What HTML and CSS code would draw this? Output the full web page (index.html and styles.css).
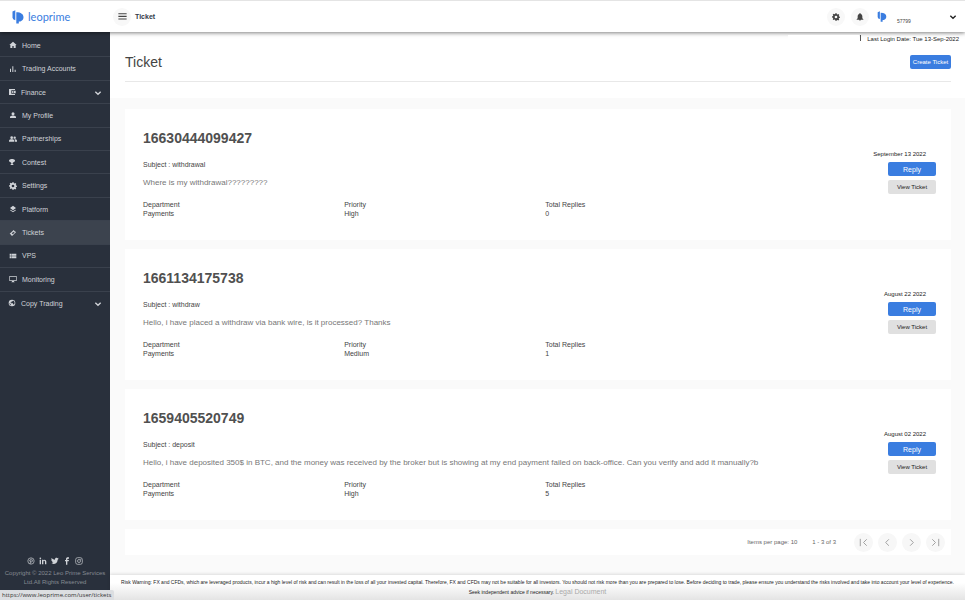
FILE: index.html
```html
<!DOCTYPE html>
<html lang="en">
<head>
  <meta charset="UTF-8">
  <title>Ticket</title>
  <link rel="stylesheet" href="styles.css">
</head>
<body>
  <header class="topbar">
    <a class="logo" href="#">
      <svg class="logo-mark" viewBox="0 0 12 14"><path d="M0.500 1.500L3.300 0.300V10.200Q0.500 9.800 0.500 7.500Z"/><path d="M4.300 2.200C9 2.200 11.500 4.200 11.500 7.200S9 11.600 6.800 11.600V13.600H4.300Z"/></svg>
      <span>leoprime</span>
    </a>
    <button class="round menu-btn" aria-label="Menu"><svg viewBox="0 0 24 24"><path d="M1 3h22v3H1zM1 10h22v3H1zM1 17h22v3H1z"/></svg></button>
    <span class="topbar-title">Ticket</span>
    <div class="topbar-right">
      <button class="round" aria-label="Settings"><svg viewBox="0 0 24 24"><use href="#gear"/></svg></button>
      <button class="round" aria-label="Notifications"><svg viewBox="0 0 24 24"><path d="M12 23a2.500 2.500 0 0 0 2.500-2.500h-5A2.500 2.500 0 0 0 12 23zM19 16v-6c0-3.500-2-6-5-6.700V2a2 2 0 0 0-4 0v1.300C7 4 5 6.500 5 10v6l-3 3v1h20v-1z"/></svg></button>
      <svg class="avatar" viewBox="0 0 12 14"><path d="M0.500 1.500L3.300 0.300V10.200Q0.500 9.800 0.500 7.500Z"/><path d="M4.300 2.200C9 2.200 11.500 4.200 11.500 7.200S9 11.600 6.800 11.600V13.600H4.300Z"/></svg>
      <span class="account">57799</span>
      <button class="account-toggle" aria-label="Account"><svg viewBox="0 0 12 8"><path d="M2 2l4 4 4-4"/></svg></button>
    </div>
  </header>

  <div class="layout">
    <aside class="sidebar">
      <nav class="nav">
        <a href="#"><svg viewBox="0 0 24 24"><path d="M10 21v-6h4v6h6v-9h3L12 2 1 12h3v9z"/></svg>Home</a>
        <a href="#"><svg viewBox="0 0 24 24"><path d="M3 11h3v10H3zM10 4h3v17h-3zM17 14h3v7h-3z"/></svg>Trading Accounts</a>
        <a href="#" class="group"><svg viewBox="0 0 24 24"><path d="M21 18v3H3V3h18v3h-9a2 2 0 0 0-2 2v8a2 2 0 0 0 2 2zM12 8v8h11V8zm4 6a2 2 0 1 1 0-4 2 2 0 0 1 0 4z"/></svg>Finance<svg class="chevron" viewBox="0 0 12 8"><path d="M2 2l4 4 4-4"/></svg></a>
        <a href="#"><svg viewBox="0 0 24 24"><circle cx="12" cy="8" r="4.500"/><path d="M3 21v-3c0-3 6-4.500 9-4.500s9 1.500 9 4.500v3z"/></svg>My Profile</a>
        <a href="#"><svg viewBox="0 0 24 24"><circle cx="8" cy="8" r="4"/><circle cx="17" cy="8" r="3.500"/><path d="M0 20v-3c0-3 5-4 8-4s8 1 8 4v3zM17 13c3 0 7 1.500 7 4v3h-6v-3c0-2-1-3-2-4z"/></svg>Partnerships</a>
        <a href="#"><svg viewBox="0 0 24 24"><path d="M4 3h10v2h4c0 5-1 7-5 7.500-.5 1.500-1.500 2-2 2.500v3h2v3H5v-3h2v-3c-.5-.5-1.500-1-2-2.500C1 12 0 10 0 5h4z"/></svg>Contest</a>
        <a href="#"><svg viewBox="0 0 24 24"><use href="#gear"/></svg>Settings</a>
        <a href="#"><svg viewBox="0 0 24 24"><path d="M12 2l9 7-9 7-9-7zM5 14l7 5 7-5 2 1.500L12 22l-9-6.500z"/></svg>Platform</a>
        <a href="#" class="active"><svg viewBox="0 0 24 24"><path d="M14 3l2 2a2 2 0 0 0 2 2l3 3L9 21l-3-3a2 2 0 0 0-2-2l-2-2zm0 5l-6 5 3 3 6-5z" fill-rule="evenodd"/></svg>Tickets</a>
        <a href="#"><svg viewBox="0 0 24 24"><path d="M2 5h5v4H2zM8 5h14v4H8zM2 10h5v4H2zM8 10h14v4H8zM2 15h5v4H2zM8 15h14v4H8z"/></svg>VPS</a>
        <a href="#"><svg viewBox="0 0 24 24"><path d="M1 3h22v15h-8v2h2v2H7v-2h2v-2H1zm2 2v11h18V5z" fill-rule="evenodd"/></svg>Monitoring</a>
        <a href="#" class="group"><svg viewBox="0 0 24 24"><path d="M12 2a10 10 0 1 0 0 20 10 10 0 0 0 0-20zM11 20c-4-.5-7-4-7-8l5 5v1c0 1 1 2 2 2zm7-2.500c-.3-.9-1-1.500-2-1.500h-1v-3H8v-3h3V7h4V4.500c5 2 6.500 8 3 13z" fill-rule="evenodd"/></svg>Copy Trading<svg class="chevron" viewBox="0 0 12 8"><path d="M2 2l4 4 4-4"/></svg></a>
      </nav>
      <div class="sidebar-foot">
        <div class="social">
          <a href="#" aria-label="Pinterest"><svg viewBox="0 0 24 24"><circle cx="12" cy="12" r="9.500" class="line"/><path class="line" d="M9 21l3-12M8.500 13c-3-6 7-9 8-3 .5 5-4 6-5.500 4"/></svg></a>
          <a href="#" aria-label="LinkedIn"><svg viewBox="0 0 24 24"><circle cx="4" cy="4" r="2.500"/><path d="M2 8h4v14H2zM9 8h4v2c3-4 9-2 9 4v8h-4v-8c0-4-5-3-5 0v8H9z"/></svg></a>
          <a href="#" aria-label="Twitter"><svg viewBox="0 0 24 24"><path d="M23 5l-3 3C20 18 9 25 1 19c3 0 5-.5 6.500-2-2.500 0-4-1.500-4.500-3h2C2.500 13 1 11 1 9l2 .5C1 8 .5 5 2 3c3 3 6 5 10 5-1-5 4-7.500 7.500-4.500L22.500 2 21 5z"/></svg></a>
          <a href="#" aria-label="Facebook"><svg viewBox="0 0 24 24"><path d="M9 23V13H6V9h3V6c0-4 3-6 9-5v4h-2c-2 0-3 .5-3 2v2h5l-1 4h-4v10z"/></svg></a>
          <a href="#" aria-label="Instagram"><svg viewBox="0 0 24 24"><rect class="line" x="2" y="2" width="20" height="20" rx="6"/><circle class="line" cx="12" cy="12" r="4.500"/><circle cx="17.500" cy="6.500" r="1.500"/></svg></a>
        </div>
        <p>Copyright © 2022 Leo Prime Services Ltd.All Rights Reserved</p>
      </div>
    </aside>

    <main class="main">
      <section class="page-head">
        <div class="last-login"><span class="login-user"></span><span class="divider"></span><span>Last Login Date: Tue 13-Sep-2022</span></div>
        <div class="title-row">
          <h1>Ticket</h1>
          <button class="btn-create">Create Ticket</button>
        </div>
      </section>

      <section class="tickets">
        <article class="ticket">
          <div class="ticket-body">
            <h2>16630444099427</h2>
            <p class="subject">Subject : withdrawal</p>
            <p class="message">Where is my withdrawal?????????</p>
            <dl>
              <div><dt>Department</dt><dd>Payments</dd></div>
              <div><dt>Priority</dt><dd>High</dd></div>
              <div><dt>Total Replies</dt><dd>0</dd></div>
            </dl>
          </div>
          <div class="ticket-side">
            <time>September 13 2022</time>
            <button class="btn-reply">Reply</button>
            <button class="btn-view">View Ticket</button>
          </div>
        </article>

        <article class="ticket">
          <div class="ticket-body">
            <h2>1661134175738</h2>
            <p class="subject">Subject : withdraw</p>
            <p class="message">Hello, i have placed a withdraw via bank wire, is it processed? Thanks</p>
            <dl>
              <div><dt>Department</dt><dd>Payments</dd></div>
              <div><dt>Priority</dt><dd>Medium</dd></div>
              <div><dt>Total Replies</dt><dd>1</dd></div>
            </dl>
          </div>
          <div class="ticket-side">
            <time>August 22 2022</time>
            <button class="btn-reply">Reply</button>
            <button class="btn-view">View Ticket</button>
          </div>
        </article>

        <article class="ticket">
          <div class="ticket-body">
            <h2>1659405520749</h2>
            <p class="subject">Subject : deposit</p>
            <p class="message">Hello, i have deposited 350$ in BTC, and the money was received by the broker but is showing at my end payment failed on back-office. Can you verify and add it manually?b</p>
            <dl>
              <div><dt>Department</dt><dd>Payments</dd></div>
              <div><dt>Priority</dt><dd>High</dd></div>
              <div><dt>Total Replies</dt><dd>5</dd></div>
            </dl>
          </div>
          <div class="ticket-side">
            <time>August 02 2022</time>
            <button class="btn-reply">Reply</button>
            <button class="btn-view">View Ticket</button>
          </div>
        </article>

        <div class="paginator">
          <span>Items per page: 10</span>
          <span>1 - 3 of 3</span>
          <div class="pages">
            <button aria-label="First page"><svg viewBox="0 0 24 24"><path d="M5 4v16M19 5l-7 7 7 7"/></svg></button>
            <button aria-label="Previous page"><svg viewBox="0 0 24 24"><path d="M15 5l-7 7 7 7"/></svg></button>
            <button aria-label="Next page"><svg viewBox="0 0 24 24"><path d="M9 5l7 7-7 7"/></svg></button>
            <button aria-label="Last page"><svg viewBox="0 0 24 24"><path d="M5 5l7 7-7 7M19 4v16"/></svg></button>
          </div>
        </div>
      </section>

      <footer class="risk">
        <p>Risk Warning: FX and CFDs, which are leveraged products, incur a high level of risk and can result in the loss of all your invested capital. Therefore, FX and CFDs may not be suitable for all investors. You should not risk more than you are prepared to lose. Before deciding to trade, please ensure you understand the risks involved and take into account your level of experience.</p>
        <p>Seek independent advice if necessary. <a href="#">Legal Document</a></p>
      </footer>
    </main>
  </div>

  <div class="link-status">https://www.leoprime.com/user/tickets</div>

  <svg class="defs" aria-hidden="true">
    <symbol id="gear" viewBox="0 0 24 24"><path fill-rule="evenodd" d="M10 1h4l.7 3 1.800.8L19.200 3.200 22 6l-1.600 2.600.8 1.900 2.800.5v3.500l-3 .7-.8 1.800 1.600 2.600-2.700 2.700-2.600-1.600-1.900.8L14 23h-4l-.7-2.500-1.800-.8-2.700 1.600L2.100 18.600 3.700 16l-.8-1.800L0 13.500V10l2.900-.5.8-1.900L2.100 5l2.700-2.600 2.600 1.700 1.900-.8zM12 8a4 4 0 1 0 0 8 4 4 0 0 0 0-8z"/></symbol>
  </svg>
</body>
</html>
```
FILE: styles.css
```css
* {
  box-sizing: border-box;
}

body {
  margin: 0;
  min-height: 100vh;
  display: flex;
  flex-direction: column;
  font-family: "Liberation Sans", Arial, sans-serif;
  font-size: 7px;
  color: #444;
  background: #fafafa;
}

h1, h2, p, dl, dd {
  margin: 0;
}

a {
  color: inherit;
  text-decoration: none;
}

button {
  font-family: inherit;
  border: none;
  padding: 0;
  cursor: pointer;
}

svg {
  display: block;
  fill: currentColor;
}

.defs {
  position: absolute;
  width: 0;
  height: 0;
}

/* top bar */
.topbar {
  position: relative;
  z-index: 2;
  height: 32px;
  display: flex;
  align-items: center;
  background: #fff;
  border-top: 1px solid #e4e4e4;
  box-shadow: 0 1px 4px rgba(0, 0, 0, 0.5);
}

.logo {
  width: 113px;
  padding-left: 12px;
  display: flex;
  align-items: center;
  gap: 4px;
  color: #3a7de0;
  font-family: Lato, sans-serif;
  font-size: 11px;
}

.logo-mark {
  width: 12px;
  height: 14px;
}

.round {
  width: 18px;
  height: 18px;
  border-radius: 50%;
  display: flex;
  align-items: center;
  justify-content: center;
  background: #f8f8f8;
  color: #444;
}

.round svg {
  width: 9px;
  height: 9px;
}

.topbar-title {
  margin-left: 4px;
  font-size: 7px;
  font-weight: bold;
  color: #333a48;
}

.topbar-right {
  margin-left: auto;
  padding-right: 8px;
  display: flex;
  align-items: center;
  gap: 6px;
}

.topbar-right .round svg {
  width: 8px;
  height: 8px;
}

.avatar {
  width: 10px;
  height: 11px;
  margin-left: 2px;
  color: #3a7de0;
}

.account {
  width: 46px;
  margin-left: 4px;
  padding-top: 8px;
  font-size: 5px;
}

.account-toggle {
  background: none;
  color: #222;
}

.account-toggle svg,
.chevron {
  width: 8px;
  height: 6px;
  fill: none;
  stroke: currentColor;
  stroke-width: 2;
}

.layout {
  flex: 1;
  display: flex;
}

/* sidebar */
.sidebar {
  width: 110px;
  flex-shrink: 0;
  display: flex;
  flex-direction: column;
  justify-content: space-between;
  padding-top: 2px;
  background: #29303c;
  color: #d0d3d8;
}

.nav {
  display: grid;
  grid-auto-rows: 1fr;
  height: 281px;
}

.nav a {
  display: flex;
  align-items: center;
  gap: 5px;
  padding: 0 8px 0 9px;
  border-bottom: 1px solid #3a414d;
}

.nav a:last-child {
  border-bottom: none;
}

.nav a.active {
  background: #3c434e;
}

.nav a svg {
  width: 8px;
  height: 8px;
}

.nav a.group {
  padding-left: 8px;
}

.nav a .chevron {
  width: 8px;
  height: 6px;
  margin: 2px 0 0 auto;
}

.sidebar-foot {
  padding: 0 4px 14px;
  text-align: center;
  color: #858a92;
  font-size: 6px;
  line-height: 9px;
}

.social {
  display: flex;
  justify-content: center;
  gap: 4px;
  margin-bottom: 4px;
  color: #d0d3d8;
}

.social svg {
  width: 8px;
  height: 8px;
}

.line {
  fill: none;
  stroke: currentColor;
  stroke-width: 2;
}

/* content */
.main {
  flex: 1;
  min-width: 0;
  display: flex;
  flex-direction: column;
}

.page-head {
  height: 66px;
  padding: 0 14px 0 15px;
  background: #fff;
}

.last-login {
  display: flex;
  justify-content: flex-end;
  margin-right: -8px;
  padding-top: 3px;
  font-size: 6px;
  line-height: 8px;
  color: #222;
}

/* sits over the shadow of the top bar */
.login-user {
  position: relative;
  z-index: 3;
  width: 71px;
  height: 7px;
  background: #fff;
}

.divider {
  width: 1px;
  height: 6px;
  margin: 0 6px 0 1px;
  background: #555;
}

.title-row {
  display: flex;
  align-items: center;
  justify-content: space-between;
  height: 39px;
  border-bottom: 1px solid #e8e8e8;
}

h1 {
  font-size: 14px;
  font-weight: normal;
}

.btn-create {
  height: 14px;
  width: 41px;
  border-radius: 2px;
  background: #3a7de0;
  color: #fff;
  font-size: 6px;
  white-space: nowrap;
}

.tickets {
  flex: 1;
  display: flex;
  flex-direction: column;
  gap: 9px;
  padding: 11px 14px 20px 15px;
}

.ticket {
  display: flex;
  min-height: 131px;
  padding: 20px 15px 18px 18px;
  background: #fff;
}

.ticket-body {
  flex: 1;
}

h2 {
  font-size: 14px;
  line-height: 18px;
  color: #505050;
}

.subject {
  margin-top: 13px;
  line-height: 10px;
}

.message {
  margin-top: 8px;
  font-size: 8px;
  line-height: 10px;
  color: #777;
}

dl {
  display: grid;
  grid-template-columns: repeat(3, 1fr);
  width: 83%;
  margin-top: 12px;
  line-height: 9px;
}

.ticket-side {
  width: 66px;
  display: flex;
  flex-direction: column;
  align-items: flex-end;
  gap: 4px;
  padding-top: 21px;
}

.ticket-side time {
  margin-right: 10px;
  font-size: 6px;
  line-height: 8px;
  color: #222;
}

.btn-reply,
.btn-view {
  width: 48px;
  height: 14px;
  border-radius: 2px;
}

.btn-reply {
  background: #3a7de0;
  color: #fff;
  font-size: 7px;
}

.btn-view {
  background: #e0e0e0;
  color: #222;
  font-size: 6px;
}

.paginator {
  display: flex;
  align-items: center;
  justify-content: flex-end;
  gap: 15px;
  height: 26px;
  padding-right: 6px;
  background: #fff;
  font-size: 6px;
  color: #666;
}

.pages {
  display: flex;
  gap: 5px;
  margin-left: 3px;
}

.pages button {
  width: 19px;
  height: 19px;
  border-radius: 50%;
  display: flex;
  align-items: center;
  justify-content: center;
  background: #f7f7f7;
  color: #999;
}

.pages svg {
  width: 11px;
  height: 11px;
  fill: none;
  stroke: currentColor;
  stroke-width: 2;
}

.risk {
  padding: 3px 8px 4px;
  background: linear-gradient(#fff 30%, #e2e2e2);
  box-shadow: 0 -1px 3px rgba(0, 0, 0, 0.12);
  text-align: center;
  font-size: 5px;
  line-height: 9px;
  color: #222;
}

.risk a {
  font-size: 7px;
  color: #aaa;
}

/* browser link preview in the corner */
.link-status {
  position: fixed;
  left: 0;
  bottom: 0;
  z-index: 3;
  height: 10px;
  padding: 0 3px 0 2px;
  border-top-right-radius: 2px;
  background: #dcdee1;
  color: #333;
  font-family: "Open Sans", sans-serif;
  font-size: 6px;
  line-height: 10px;
}
```
